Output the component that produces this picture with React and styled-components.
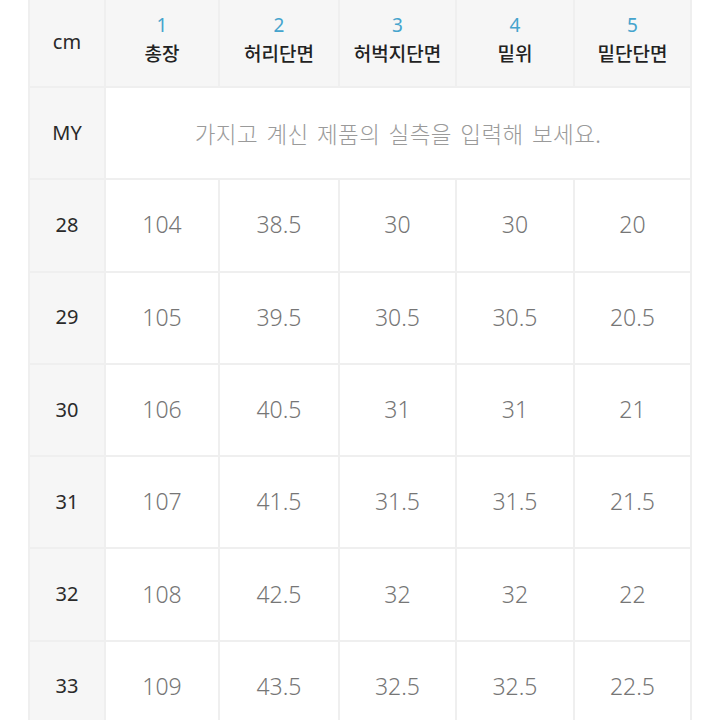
import React from 'react';
import styled, { createGlobalStyle } from 'styled-components';

const GlobalStyle = createGlobalStyle`
  html, body {
    margin: 0;
    padding: 0;
    background: #fff;
    overflow: hidden;
  }
  * {
    box-sizing: border-box;
  }
`;

const columns = [
  { no: 1, label: '총장' },
  { no: 2, label: '허리단면' },
  { no: 3, label: '허벅지단면' },
  { no: 4, label: '밑위' },
  { no: 5, label: '밑단단면' },
];

const rows = [
  ['28', '104', '38.5', '30', '30', '20'],
  ['29', '105', '39.5', '30.5', '30.5', '20.5'],
  ['30', '106', '40.5', '31', '31', '21'],
  ['31', '107', '41.5', '31.5', '31.5', '21.5'],
  ['32', '108', '42.5', '32', '32', '22'],
  ['33', '109', '43.5', '32.5', '32.5', '22.5'],
];

function App() {
  return (
    <>
      <GlobalStyle />
      <Page>
        <SizeGrid>
          <HeadCell>
            <Unit>cm</Unit>
          </HeadCell>
          {columns.map((c) => (
            <HeadCell key={c.no} $padBottom>
              <ColNo>{c.no}</ColNo>
              <ColLabel>{c.label}</ColLabel>
            </HeadCell>
          ))}

          <SideCell>MY</SideCell>
          <PlaceholderCell>가지고 계신 제품의 실측을 입력해 보세요.</PlaceholderCell>

          {rows.map(([size, ...values]) => (
            <React.Fragment key={size}>
              <SideCell>{size}</SideCell>
              {values.map((v, i) => (
                <ValueCell key={i}>{v}</ValueCell>
              ))}
            </React.Fragment>
          ))}
        </SizeGrid>
      </Page>
    </>
  );
}

const Page = styled.div`
  width: 720px;
  height: 720px;
  padding-left: 28px;
  font-family: 'Noto Sans', 'Noto Sans CJK KR', sans-serif;
`;

const SizeGrid = styled.div`
  display: grid;
  width: max-content;
  grid-template-columns: 74px 112px 118px 115px 116px 115px;
  grid-template-rows: 86px;
  grid-auto-rows: 90.3px;
  gap: 2px;
  padding: 0 2px 2px 2px;
  background: #efefef;
`;

const Cell = styled.div`
  display: flex;
  align-items: center;
  justify-content: center;
  background: #fff;
`;

const HeadCell = styled(Cell)`
  flex-direction: column;
  background: #f6f6f6;
  padding-bottom: ${(p) => (p.$padBottom ? '8px' : '3px')};
`;

const Unit = styled.span`
  font-size: 20px;
  color: #2a2a2a;
`;

const ColNo = styled.span`
  font-size: 19px;
  line-height: 27px;
  color: #45a4cd;
`;

const ColLabel = styled.span`
  font-family: 'Noto Sans CJK KR', sans-serif;
  font-size: 19px;
  line-height: 27px;
  font-weight: 500;
  color: #222;
`;

const SideCell = styled(Cell)`
  background: #f6f6f6;
  font-size: 20px;
  color: #2a2a2a;
  padding-bottom: 2px;
`;

const PlaceholderCell = styled(Cell)`
  grid-column: span 5;
  font-family: 'Noto Sans CJK KR', sans-serif;
  font-size: 22.5px;
  font-weight: 300;
  letter-spacing: 0.4px;
  word-spacing: 3px;
  color: #9a9a9a;
`;

const ValueCell = styled(Cell)`
  font-size: 23px;
  font-weight: 300;
  color: #767676;
  padding-bottom: 2px;
`;

export default App;
